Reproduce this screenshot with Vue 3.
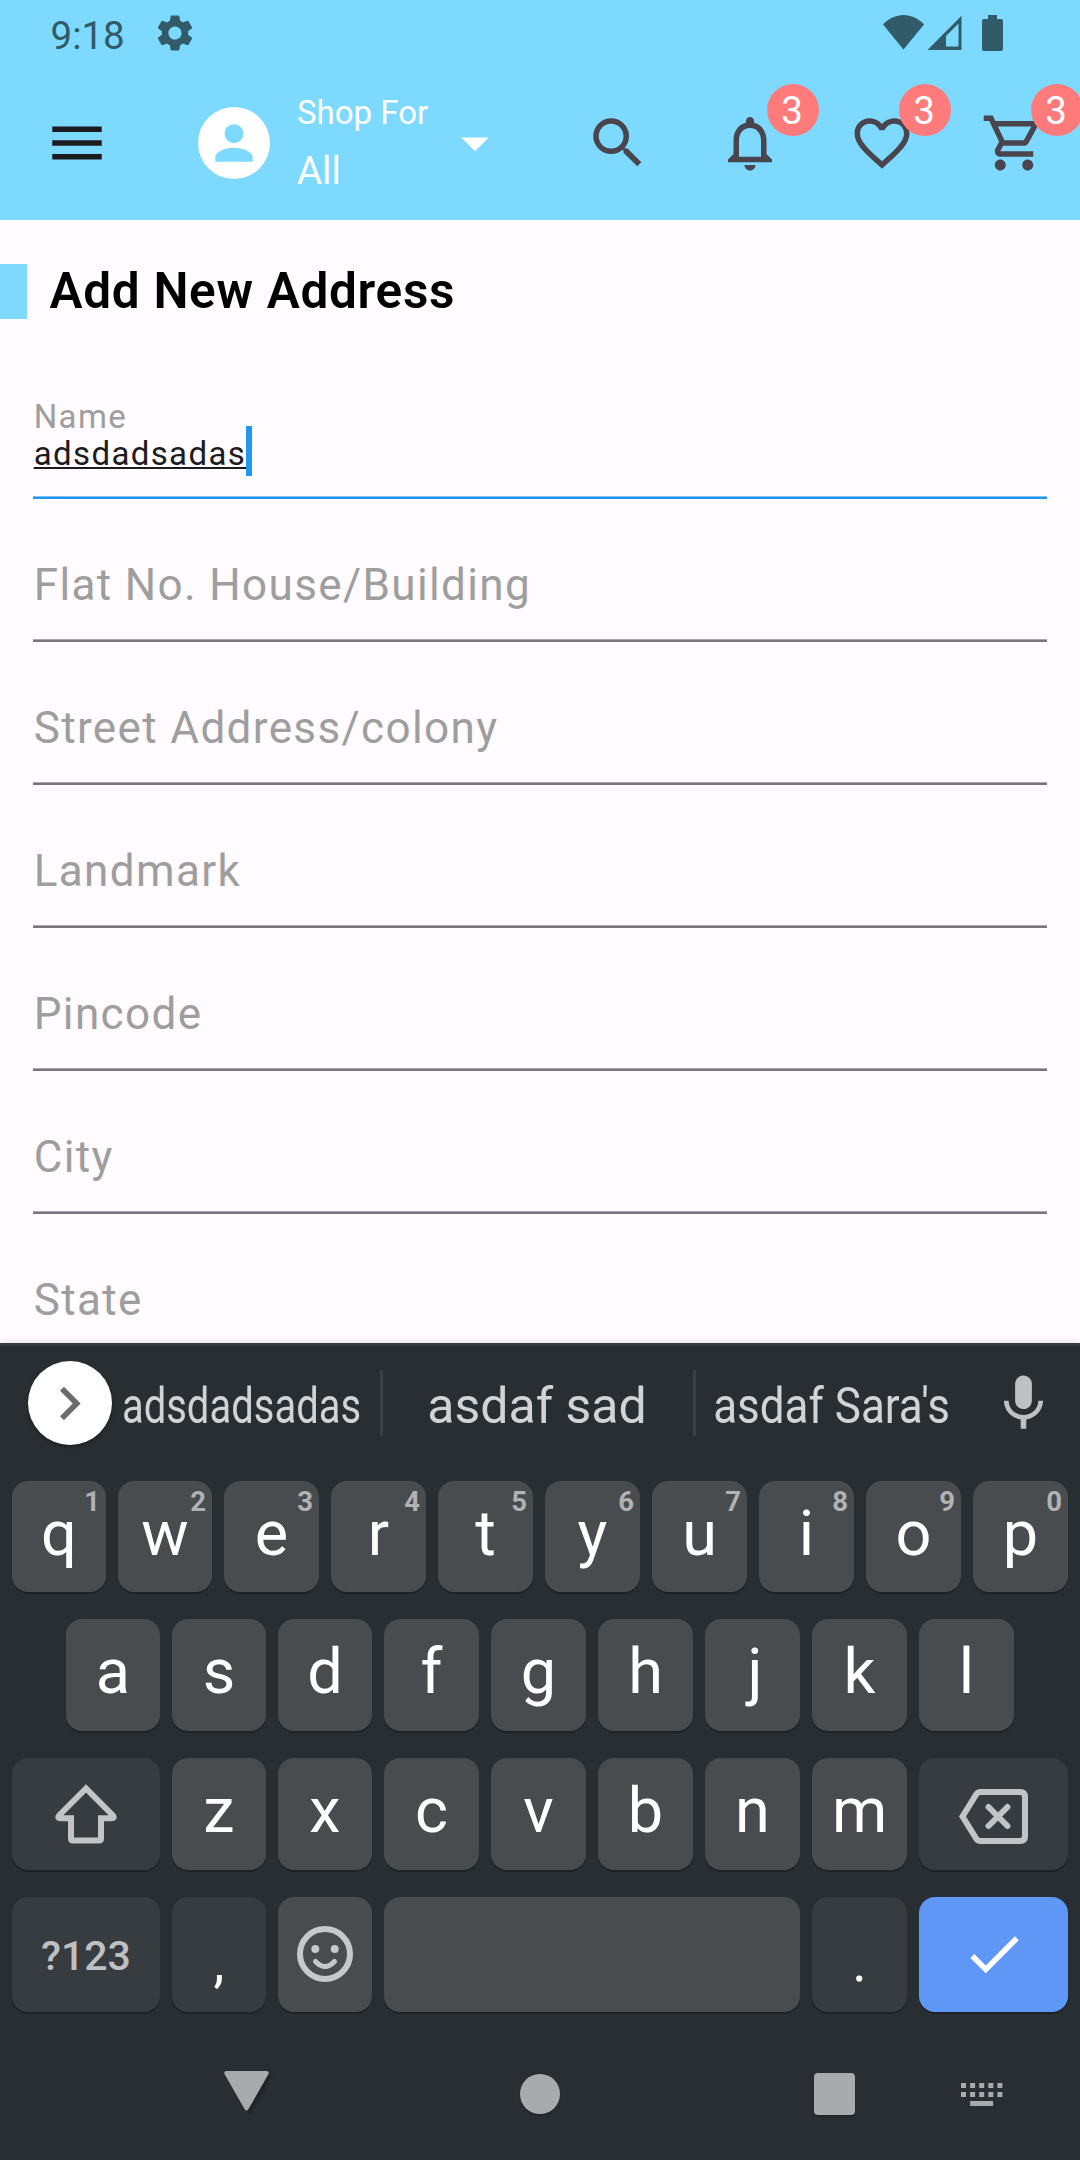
<script setup>
const actions = [
  { name: 'search', badge: null, path: 'M15.5 14h-.79l-.28-.27A6.471 6.471 0 0 0 16 9.5 6.5 6.5 0 1 0 9.5 16c1.61 0 3.09-.59 4.23-1.57l.27.28v.79l5 4.99L20.49 19l-4.99-5zm-6 0C7.01 14 5 11.99 5 9.5S7.01 5 9.5 5 14 7.01 14 9.5 11.99 14 9.5 14z' },
  { name: 'notifications', badge: 3, path: 'M12 22c1.1 0 2-.9 2-2h-4c0 1.1.9 2 2 2zm6-6v-5c0-3.07-1.63-5.64-4.5-6.32V4c0-.83-.67-1.5-1.5-1.5s-1.5.67-1.5 1.5v.68C7.64 5.36 6 7.92 6 11v5l-2 2v1h16v-1l-2-2zm-2 1H8v-6c0-2.48 1.51-4.5 4-4.5s4 2.02 4 4.5v6z' },
  { name: 'wishlist', badge: 3, path: 'M16.5 3c-1.74 0-3.41.81-4.5 2.09C10.91 3.81 9.24 3 7.5 3 4.42 3 2 5.42 2 8.5c0 3.78 3.4 6.86 8.55 11.54L12 21.35l1.45-1.32C18.6 15.36 22 12.28 22 8.5 22 5.42 19.58 3 16.5 3zm-4.4 15.55l-.1.1-.1-.1C7.14 14.24 4 11.39 4 8.5 4 6.5 5.5 5 7.5 5c1.54 0 3.04.99 3.57 2.36h1.87C13.46 5.99 14.96 5 16.5 5c2 0 3.5 1.5 3.5 3.5 0 2.89-3.14 5.74-7.9 10.05z' },
  { name: 'cart', badge: 3, path: 'M15.55 13c.75 0 1.41-.41 1.75-1.03l3.58-6.49A.996.996 0 0 0 20.01 4H5.21l-.94-2H1v2h2l3.6 7.59-1.35 2.44C4.52 15.37 5.48 17 7 17h12v-2H7l1.1-2h7.45zM6.16 6h12.15l-2.76 5H8.53L6.16 6zM7 18c-1.1 0-1.99.9-1.99 2S5.9 22 7 22s2-.9 2-2-.9-2-2-2zm10 0c-1.1 0-1.99.9-1.99 2s.89 2 1.99 2 2-.9 2-2-.9-2-2-2z' },
]

const fields = ['Flat No. House/Building', 'Street Address/colony', 'Landmark', 'Pincode', 'City', 'State']

const topRow = [...'qwertyuiop'].map((letter, i) => ({ letter, hint: (i + 1) % 10 }))
const middleRow = [...'asdfghjkl']
const bottomRow = [...'zxcvbnm']
</script>

<template>
  <div class="screen">
    <header class="header">
      <div class="status">
        <span class="time">9:18</span>
        <svg class="gear" viewBox="0 0 24 24"><path d="M19.14,12.94c0.04-0.3,0.06-0.61,0.06-0.94c0-0.32-0.02-0.64-0.07-0.94l2.03-1.58c0.18-0.14,0.23-0.41,0.12-0.61l-1.92-3.32c-0.12-0.22-0.37-0.29-0.59-0.22l-2.39,0.96c-0.5-0.38-1.03-0.7-1.62-0.94L14.4,2.81c-0.04-0.24-0.24-0.41-0.48-0.41h-3.84c-0.24,0-0.43,0.17-0.47,0.41L9.25,5.35C8.66,5.59,8.12,5.92,7.63,6.29L5.24,5.33c-0.22-0.08-0.47,0-0.59,0.22L2.74,8.87C2.62,9.08,2.66,9.34,2.86,9.48l2.03,1.58C4.84,11.36,4.8,11.69,4.8,12s0.02,0.64,0.07,0.94l-2.03,1.58c-0.18,0.14-0.23,0.41-0.12,0.61l1.92,3.32c0.12,0.22,0.37,0.29,0.59,0.22l2.39-0.96c0.5,0.38,1.03,0.7,1.62,0.94l0.36,2.54c0.05,0.24,0.24,0.41,0.48,0.41h3.84c0.24,0,0.44-0.17,0.47-0.41l0.36-2.54c0.59-0.24,1.13-0.56,1.62-0.94l2.39,0.96c0.22,0.08,0.47,0,0.59-0.22l1.92-3.32c0.12-0.22,0.07-0.47-0.12-0.61L19.14,12.94z M12,15.6c-1.98,0-3.6-1.62-3.6-3.6s1.62-3.6,3.6-3.6s3.6,1.62,3.6,3.6S13.98,15.6,12,15.6z" /></svg>
        <svg class="signals" viewBox="0 0 120 36">
          <path d="M20.5 34.5 0 9.5C5.5 3.5 13 0 20.5 0S35.5 3.5 41 9.5z" />
          <path fill-rule="evenodd" d="M44.5 35 78.5 .7V35zM63 31.5H75.5V8.5L63 21z" />
          <path d="M105 0h9v4h4q2 0 2 2v28q0 2-2 2h-17q-2 0-2-2V6q0-2 2-2h4z" />
        </svg>
      </div>
      <div class="appbar">
        <svg class="icon menu" viewBox="0 0 24 24"><path d="M3 18h18v-2H3v2zm0-5h18v-2H3v2zm0-7v2h18V6H3z" /></svg>
        <div class="avatar">
          <svg viewBox="0 0 24 24"><path d="M12 12c2.21 0 4-1.79 4-4s-1.79-4-4-4-4 1.79-4 4 1.79 4 4 4zm0 2c-2.67 0-8 1.34-8 4v2h16v-2c0-2.66-5.33-4-8-4z" /></svg>
        </div>
        <div class="shop">
          <span class="shop-label">Shop For</span>
          <span class="shop-value">All</span>
        </div>
        <svg class="icon caret" viewBox="0 0 24 24"><path d="M7 10l5 5 5-5z" /></svg>
        <nav class="actions">
          <div v-for="a in actions" :key="a.name" class="action">
            <svg class="icon" viewBox="0 0 24 24"><path :d="a.path" /></svg>
            <span v-if="a.badge" class="badge">{{ a.badge }}</span>
          </div>
        </nav>
      </div>
    </header>

    <main class="form">
      <div class="heading">
        <i class="marker"></i>
        <h1>Add New Address</h1>
      </div>
      <div class="fields">
        <div class="field focused">
          <label>Name</label>
          <div class="value"><span>adsdadsadas</span><i class="cursor"></i></div>
        </div>
        <div v-for="f in fields" :key="f" class="field"><label>{{ f }}</label></div>
      </div>
    </main>

    <section class="keyboard">
      <div class="suggestions">
        <div class="expand">
          <svg viewBox="0 0 24 24"><path d="M10 6L8.59 7.41 13.17 12l-4.58 4.59L10 18l6-6z" /></svg>
        </div>
        <div class="suggestion first"><span>adsdadsadas</span></div>
        <i class="divider"></i>
        <div class="suggestion second"><span>asdaf sad</span></div>
        <i class="divider"></i>
        <div class="suggestion third"><span>asdaf Sara's</span></div>
        <svg class="mic" viewBox="0 0 24 24"><path d="M12 14c1.66 0 2.99-1.34 2.99-3L15 5c0-1.66-1.34-3-3-3S9 3.34 9 5v6c0 1.66 1.34 3 3 3zm5.3-3c0 3-2.54 5.1-5.3 5.1S6.7 14 6.7 11H5c0 3.41 2.72 6.23 6 6.72V21h2v-3.28c3.28-.48 6-3.3 6-6.72h-1.7z" /></svg>
      </div>

      <div class="row row-top">
        <div v-for="k in topRow" :key="k.letter" class="key">{{ k.letter }}<sup class="hint">{{ k.hint }}</sup></div>
      </div>
      <div class="row row-middle">
        <div v-for="k in middleRow" :key="k" class="key" :class="{ nudged: k === 'j' }">{{ k }}</div>
      </div>
      <div class="row row-bottom">
        <div class="key wide dark">
          <svg class="shift" viewBox="0 0 62 60"><path d="M31 4.5 4.5 31Q1.5 34.2 6 34.2H16V54.5Q16 56.5 18 56.5H44Q46 56.5 46 54.5V34.2H56Q60.5 34.2 57.5 31Z" /></svg>
        </div>
        <div v-for="k in bottomRow" :key="k" class="key">{{ k }}</div>
        <div class="key wide dark">
          <svg class="backspace" viewBox="0 0 69 55"><path d="M3.5 27.5 17.5 5Q19 3 21.5 3H61Q66 3 66 8V47Q66 52 61 52H21.5Q19 52 17.5 50ZM29.5 18 48.5 37M48.5 18 29.5 37" /></svg>
        </div>
      </div>
      <div class="row row-space">
        <div class="key wide dark symbols">?123</div>
        <div class="key dark punct">,</div>
        <div class="key">
          <svg class="emoji" viewBox="0 0 56 56">
            <circle cx="28" cy="28" r="25" class="line" />
            <circle cx="18.3" cy="23" r="4" /><circle cx="37.7" cy="23" r="4" />
            <path d="M18.5 35.5Q28 45.5 37.5 35.5" class="line mouth" />
          </svg>
        </div>
        <div class="key space"></div>
        <div class="key dark punct">.</div>
        <div class="key wide enter">
          <svg class="icon" viewBox="0 0 24 24"><path d="M9 16.17L4.83 12l-1.42 1.41L9 19 21 7l-1.41-1.41z" /></svg>
        </div>
      </div>

      <div class="navbar">
        <svg class="nav-back" viewBox="0 0 45 40"><path d="M2.5 0H42.5Q45.5 0 44.5 3L24.5 38Q22.5 41 20.5 38L.5 3Q-.5 0 2.5 0Z" /></svg>
        <i class="nav-home"></i>
        <i class="nav-recent"></i>
        <svg class="nav-ime" viewBox="0 0 42 23">
          <template v-for="c in 5" :key="c">
            <rect :x="(c - 1) * 9.1" y="0" width="5" height="5" />
            <rect :x="(c - 1) * 9.1" y="9" width="5" height="5" />
          </template>
          <rect x="9.1" y="18" width="23" height="5" />
        </svg>
      </div>
    </section>
  </div>
</template>

<style>
body {
  margin: 0;
}
</style>

<style scoped>
.screen {
  width: 1080px;
  height: 2160px;
  display: flex;
  flex-direction: column;
  overflow: hidden;
  background: #fffbfe;
  font-family: Roboto, "Noto Sans", sans-serif;
}
svg {
  display: block;
  flex: none;
}
.icon {
  width: 66px;
  height: 66px;
}

/* header */
.header {
  flex: none;
  height: 220px;
  background: #7ddafe;
}
.status {
  height: 66px;
  display: flex;
  align-items: center;
  padding: 0 77px 0 50.5px;
  color: #325b69;
  fill: #325b69;
}
.time {
  width: 102px;
  padding-top: 4px;
  font-size: 38.5px;
}
.gear {
  width: 44px;
  height: 44px;
}
.signals {
  width: 120px;
  height: 36px;
  margin-left: auto;
}
.appbar {
  height: 154px;
  display: flex;
  align-items: center;
  padding-left: 44px;
  color: #fff;
}
.menu {
  fill: #1c1b1f;
}
.avatar {
  width: 72px;
  height: 72px;
  margin-left: 88px;
  border-radius: 50%;
  background: #fff;
  display: flex;
  align-items: center;
  justify-content: center;
}
.avatar svg {
  width: 56px;
  height: 56px;
  fill: #7ddafe;
}
.shop {
  width: 144.5px;
  margin: 0 0 3px 27px;
  display: flex;
  flex-direction: column;
  line-height: 58px;
  white-space: nowrap;
}
.shop-label {
  font-size: 33px;
}
.shop-value {
  font-size: 38.5px;
}
.caret {
  fill: #fff;
}
.actions {
  display: flex;
  margin-left: auto;
}
.action {
  position: relative;
  width: 132px;
  height: 132px;
  display: flex;
  align-items: center;
  justify-content: center;
  fill: #49454f;
}
.badge {
  position: absolute;
  left: 83px;
  top: 7px;
  width: 52px;
  height: 52px;
  border-radius: 50%;
  background: #ff7b7b;
  font-size: 38.5px;
  line-height: 53px;
  text-align: center;
  text-indent: -2px;
}

/* form */
.form {
  flex: none;
  height: 1123px;
  overflow: hidden;
}
.heading {
  display: flex;
  align-items: center;
  height: 55px;
  margin-top: 44px;
}
.marker {
  width: 27px;
  height: 55px;
  background: #7ddafe;
}
h1 {
  margin: 0 0 0 22.5px;
  font-size: 49.5px;
  line-height: 55px;
  font-weight: 600;
  letter-spacing: 0.7px;
  color: #000;
}
.fields {
  margin-top: 37px;
  padding: 0 33px;
}
.field {
  box-sizing: border-box;
  height: 143px;
  padding: 60px 0 0 0.7px;
  letter-spacing: 1.375px;
  background: linear-gradient(#aaa6ad 1px, #79747e 1px) bottom / 100% 3px no-repeat;
}
.field label {
  display: block;
  font-size: 44px;
  line-height: 52px;
  color: #9e9e9e;
}
.field.focused {
  padding-top: 42px;
  background-image: linear-gradient(#7fc1f7 1px, #2196f3 1px);
}
.field.focused label,
.value {
  font-size: 33px;
  line-height: 37px;
}
.value {
  display: flex;
  color: #1c1b1f;
}
.value span {
  text-decoration: underline;
  text-decoration-thickness: 2px;
  text-underline-offset: 2px;
  text-decoration-skip-ink: none;
}
.cursor {
  width: 5.5px;
  height: 50px;
  margin: -9px 0;
  background: #2196f3;
}

/* keyboard */
.keyboard {
  position: relative;
  flex: none;
  box-sizing: border-box;
  height: 817px;
  border-top: 3px solid #343a3f;
  background: #292e32;
  box-shadow: 0 0 8px rgba(0, 0, 0, 0.14);
}
.suggestions {
  height: 114px;
  display: flex;
  align-items: center;
  padding-left: 28px;
  margin-bottom: 21px;
}
.expand {
  flex: none;
  box-sizing: border-box;
  width: 84px;
  height: 84px;
  padding-right: 1px;
  border-radius: 50%;
  background: #fff;
  box-shadow: 0 2px 4px rgba(0, 0, 0, 0.3);
  display: flex;
  align-items: center;
  justify-content: center;
}
.expand svg {
  width: 67px;
  height: 67px;
  fill: #6b6b6b;
}
.suggestion {
  flex: none;
  box-sizing: border-box;
  display: flex;
  justify-content: center;
  padding-top: 6px;
  font-size: 50px;
  color: #d2d3d5;
  white-space: nowrap;
}
.suggestion span {
  flex: none;
}
.first {
  width: 268px;
  padding-right: 10px;
}
.first span {
  transform: scaleX(0.8);
}
.second {
  width: 310px;
  padding-right: 2px;
}
.third {
  width: 273px;
  padding-right: 1px;
}
.third span {
  transform: scaleX(0.88);
}
.divider {
  flex: none;
  width: 3px;
  height: 66px;
  background: #3b4045;
}
.mic {
  width: 67px;
  height: 67px;
  margin-left: 21px;
  fill: #bfc0c2;
}
.row {
  display: flex;
  gap: 12px;
  padding: 0 12px;
  height: 112px;
}
.row-top {
  height: 111px;
  margin-bottom: 27px;
}
.row-middle {
  padding: 0 66px;
  margin-bottom: 27px;
}
.row-bottom {
  margin-bottom: 27px;
}
.row-space {
  height: 115px;
}
.key {
  position: relative;
  flex: none;
  width: 95px;
  border-radius: 16px;
  background: #484c4e;
  box-shadow: 0 2px 0 #1f2326;
  color: #fff;
  font-size: 63px;
  line-height: 105px;
  text-align: center;
}
.row-top .key:nth-child(-n + 2),
.row-middle .key:nth-child(-n + 3),
.row-bottom .key:nth-child(-n + 3),
.row-space .key:nth-child(-n + 3) {
  width: 94px;
}
.row .key.wide {
  width: 149px;
}
.row .key.wide:first-child {
  width: 148px;
}
.key.space {
  width: 416px;
}
.key.dark {
  background: #373c40;
}
.key.enter {
  background: #5e97f6;
}
.key.nudged {
  text-indent: 5px;
}
.hint {
  position: absolute;
  right: 6px;
  top: 5px;
  font-size: 27.5px;
  line-height: 32px;
  font-weight: 700;
  color: #b0b2b3;
}
.key.symbols {
  font-size: 41px;
  line-height: 118px;
  font-weight: 500;
  color: #bfc0c2;
}
.key.punct {
  font-size: 55px;
  line-height: 130px;
}
.row-bottom .dark,
.enter,
.row-space .key:nth-child(3) {
  display: flex;
  align-items: center;
  justify-content: center;
}
.shift,
.backspace {
  fill: none;
  stroke: #c3c4c6;
  stroke-width: 6;
}
.shift {
  width: 62px;
  height: 60px;
}
.backspace {
  width: 69px;
  height: 55px;
  margin-top: 5px;
  stroke-linecap: round;
}
.emoji {
  width: 56px;
  height: 56px;
  margin-bottom: 1px;
  fill: #c7c8ca;
}
.emoji .line {
  fill: none;
  stroke: #c7c8ca;
  stroke-width: 6;
}
.emoji .mouth {
  stroke-width: 5;
  stroke-linecap: round;
}
.enter .icon {
  margin-bottom: 1px;
  fill: #fff;
}

/* system navigation */
.navbar {
  display: flex;
  align-items: center;
  height: 164px;
  padding-left: 224px;
  fill: #a9aaac;
}
.nav-back {
  width: 45px;
  height: 40px;
  margin-bottom: 6px;
  filter: drop-shadow(3px 3px 1px rgba(0, 0, 0, 0.2));
}
.nav-home {
  width: 40px;
  height: 40px;
  margin-left: 251px;
  border-radius: 50%;
  background: #a9aaac;
  box-shadow: 0 2px 2px rgba(0, 0, 0, 0.2);
}
.nav-recent {
  width: 41px;
  height: 42px;
  margin-left: 254px;
  border-radius: 4px;
  background: #a9aaac;
  box-shadow: 0 2px 2px rgba(0, 0, 0, 0.2);
}
.nav-ime {
  width: 42px;
  height: 23px;
  margin-left: 106px;
}
</style>
